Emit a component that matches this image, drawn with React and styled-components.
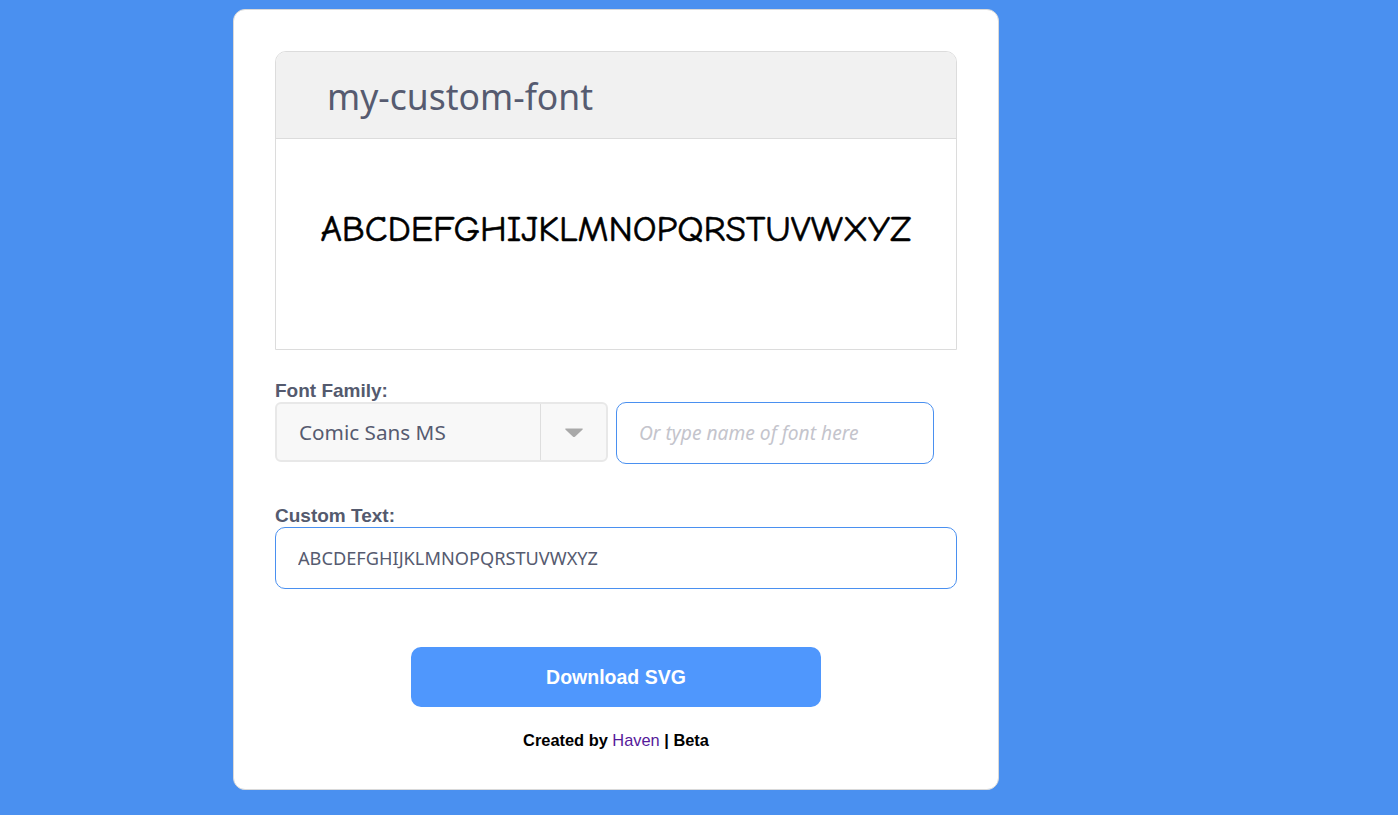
import React, { useState } from "react";
import styled, { createGlobalStyle } from "styled-components";

const GlobalStyle = createGlobalStyle`
  html, body {
    margin: 0;
    padding: 0;
    background: #4a90f0;
  }
  body {
    font-family: "Liberation Sans", Arial, sans-serif;
  }
  * {
    box-sizing: border-box;
  }
`;

const ALPHABET = "ABCDEFGHIJKLMNOPQRSTUVWXYZ";

export default function App() {
  const [fontName, setFontName] = useState("");
  const [text, setText] = useState(ALPHABET);

  return (
    <>
      <GlobalStyle />
      <Page>
        <Card>
          <Preview>
            <PreviewHeader>my-custom-font</PreviewHeader>
            <PreviewBody>
              <SampleText>{text}</SampleText>
            </PreviewBody>
          </Preview>

          <Label>Font Family:</Label>
          <FontRow>
            <SelectBox>
              <SelectValue>Comic Sans MS</SelectValue>
              <SelectArrow>
                <svg width="20" height="11" viewBox="0 0 20 11">
                  <path
                    d="M2 1.5 H18 Q19.5 1.5 18.4 2.8 L11.2 9.6 Q10 10.6 8.8 9.6 L1.6 2.8 Q0.5 1.5 2 1.5 Z"
                    fill="#a9a9a9"
                  />
                </svg>
              </SelectArrow>
            </SelectBox>
            <TextField
              $width="318px"
              $italic
              placeholder="Or type name of font here"
              value={fontName}
              onChange={(e) => setFontName(e.target.value)}
            />
          </FontRow>

          <Label $top="41px">Custom Text:</Label>
          <TextField
            $width="100%"
            value={text}
            onChange={(e) => setText(e.target.value)}
          />

          <ButtonRow>
            <DownloadButton>Download SVG</DownloadButton>
          </ButtonRow>

          <Footer>
            Created by <FooterLink href="#">Haven</FooterLink> | Beta
          </Footer>
        </Card>
      </Page>
    </>
  );
}

const Page = styled.div`
  display: flex;
  padding: 9px 0 25px 233px;
`;

const Card = styled.div`
  width: 766px;
  background: #fff;
  border: 1px solid #d9d9d9;
  border-radius: 12px;
  padding: 41px 41px 39px;
  display: flex;
  flex-direction: column;
`;

const Preview = styled.div`
  border: 1px solid #dcdcdc;
  border-radius: 11px 11px 0 0;
  overflow: hidden;
`;

const PreviewHeader = styled.div`
  height: 87px;
  background: #f1f1f1;
  border-bottom: 1px solid #dcdcdc;
  display: flex;
  align-items: center;
  padding-left: 51px;
  padding-top: 2px;
  font-family: Tahoma, "Noto Sans", sans-serif;
  font-size: 35.5px;
  color: #565b70;
`;

const PreviewBody = styled.div`
  height: 210px;
  display: flex;
  justify-content: center;
  padding-top: 67px;
`;

const SampleText = styled.div`
  font-family: "Comic Sans MS", "Comic Neue", "Noto Sans", sans-serif;
  font-size: 37px;
  line-height: 46px;
  height: 46px;
  color: #000;
  -webkit-text-stroke: 0.6px #000;
  white-space: nowrap;
`;

const Label = styled.div`
  margin-top: ${(p) => p.$top || "30px"};
  font-size: 19px;
  line-height: 22px;
  font-weight: bold;
  color: #545a6e;
`;

const FontRow = styled.div`
  display: flex;
  align-items: flex-start;
  gap: 8px;
`;

const SelectBox = styled.div`
  width: 333px;
  height: 60px;
  display: flex;
  background: #f8f8f8;
  border: 2px solid #e8e8e8;
  border-radius: 6px;
`;

const SelectValue = styled.div`
  flex: 1;
  display: flex;
  align-items: center;
  padding-left: 22px;
  padding-bottom: 1px;
  border-right: 1px solid #dedede;
  font-family: Tahoma, "Noto Sans", sans-serif;
  font-size: 20.7px;
  color: #565b70;
`;

const SelectArrow = styled.div`
  width: 65px;
  display: flex;
  align-items: center;
  justify-content: center;
`;

const TextField = styled.input`
  width: ${(p) => p.$width};
  height: 62px;
  border: 1px solid #4a90f0;
  border-radius: 10px;
  padding: 0 22px;
  font-family: Tahoma, "Noto Sans", sans-serif;
  font-size: 18.2px;
  color: #565b70;
  background: #fff;
  outline: none;

  &::placeholder {
    color: #c4c4cc;
    font-style: ${(p) => (p.$italic ? "italic" : "normal")};
    font-size: 19.2px;
  }
`;

const ButtonRow = styled.div`
  display: flex;
  justify-content: center;
  margin-top: 58px;
`;

const DownloadButton = styled.button`
  width: 410px;
  height: 60px;
  border: none;
  border-radius: 10px;
  background: #4f97fd;
  color: #fff;
  font-family: "Liberation Sans", Arial, sans-serif;
  font-size: 19.5px;
  font-weight: bold;
  cursor: pointer;
`;

const Footer = styled.div`
  margin-top: 23px;
  text-align: center;
  font-size: 16.4px;
  line-height: 20px;
  font-weight: bold;
  color: #000;
`;

const FooterLink = styled.a`
  color: #55199a;
  font-weight: normal;
  text-decoration: none;
`;
